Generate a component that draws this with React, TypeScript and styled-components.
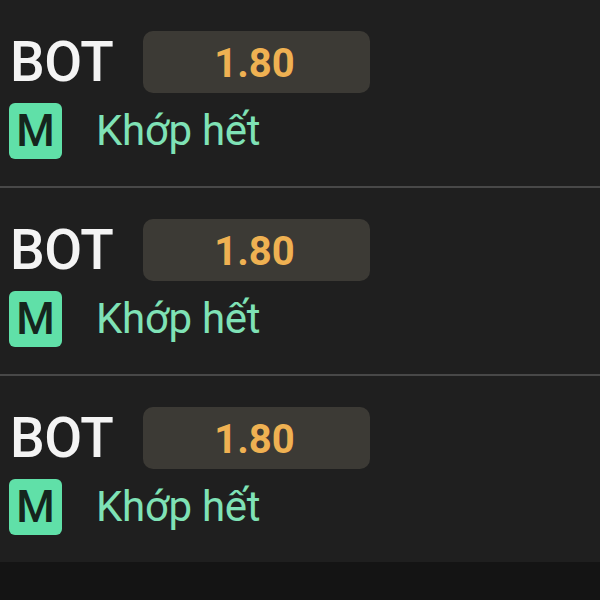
import React from "react";
import styled, { createGlobalStyle } from "styled-components";

const Global = createGlobalStyle`
  html, body { margin: 0; padding: 0; background: #141414; }
  body { font-family: Roboto, "Liberation Sans", sans-serif; }
`;

const Page = styled.div`
  width: 600px;
  height: 600px;
  background: #141414;
  display: flex;
  flex-direction: column;
  overflow: hidden;
`;

const Row = styled.div<{ $divider: boolean }>`
  box-sizing: border-box;
  height: ${(p) => (p.$divider ? "188px" : "186px")};
  background: #1f1f1f;
  border-bottom: ${(p) => (p.$divider ? "2px solid #484848" : "none")};
  padding: 31px 0 0 8px;
  display: flex;
  flex-direction: column;
  gap: 10px;
`;

const Line = styled.div`
  display: flex;
  align-items: center;
`;

const Side = styled.div`
  width: 133px;
  padding-left: 2px;
  color: #f4f4f4;
  font-size: 55px;
  font-weight: 500;
  line-height: 62px;
  letter-spacing: -0.5px;
`;

const Price = styled.div`
  width: 227px;
  height: 62px;
  border-radius: 10px;
  background: #3c3a35;
  color: #efb152;
  font-size: 40px;
  font-weight: 700;
  display: flex;
  align-items: center;
  justify-content: center;
  padding: 2px 4px 0 0;
  box-sizing: border-box;
`;

const Badge = styled.div`
  width: 53px;
  height: 56px;
  margin-left: 1px;
  border-radius: 6px;
  background: #60e0a8;
  color: #15251d;
  font-size: 44px;
  font-weight: 500;
  display: flex;
  align-items: center;
  justify-content: center;
`;

const Status = styled.div`
  margin-left: 34px;
  color: #7fe2b6;
  font-size: 42px;
  font-weight: 400;
  line-height: 56px;
  letter-spacing: -0.3px;
`;

const Rest = styled.div`
  flex: 1;
  background: #141414;
`;

export default function App() {
  const rows = [0, 1, 2];
  return (
    <Page>
      <Global />
      {rows.map((i) => (
        <Row key={i} $divider={i < rows.length - 1}>
          <Line>
            <Side>BOT</Side>
            <Price>1.80</Price>
          </Line>
          <Line>
            <Badge>M</Badge>
            <Status>Khớp hết</Status>
          </Line>
        </Row>
      ))}
      <Rest />
    </Page>
  );
}
